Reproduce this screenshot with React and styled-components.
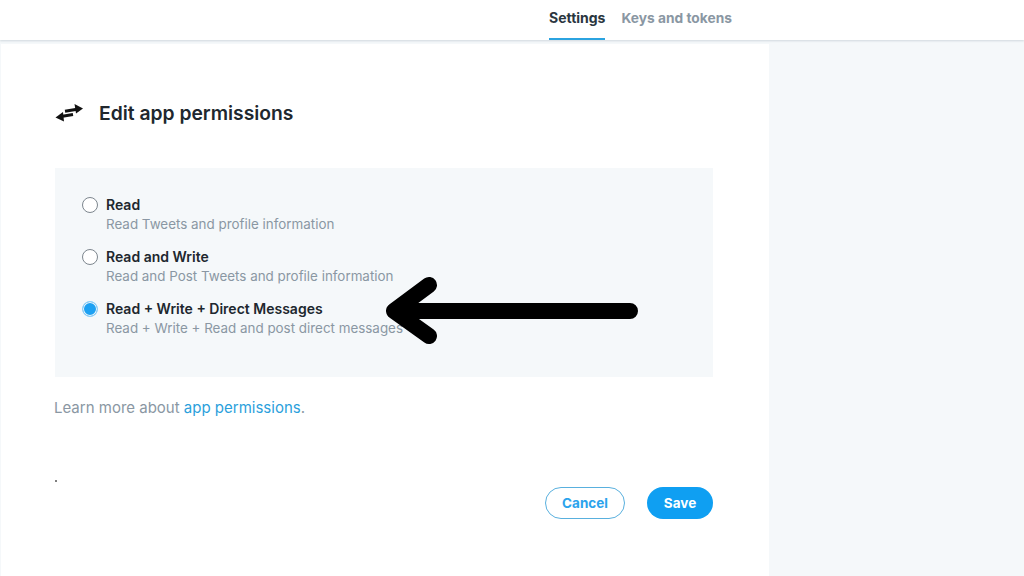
import React from "react";
import styled, { createGlobalStyle } from "styled-components";

const GlobalStyle = createGlobalStyle`
  html, body {
    margin: 0;
    padding: 0;
    height: 100%;
    overflow: hidden;
    background: #f5f8fa;
    font-family: Inter, "Liberation Sans", sans-serif;
  }
`;

const Page = styled.div`
  position: relative;
  width: 1024px;
  height: 576px;
  overflow: hidden;
  background: #f5f8fa;
`;

const Header = styled.div`
  height: 40px;
  background: #fff;
  box-shadow: 0 1px 2px rgba(101, 119, 134, 0.25);
  display: flex;
  justify-content: flex-start;
  padding-left: 549px;
  gap: 16px;
`;

const Tab = styled.div`
  height: 40px;
  box-sizing: border-box;
  padding-top: 10px;
  font-size: ${(p) => (p.$active ? "14px" : "13.75px")};
  line-height: 16px;
  font-weight: 700;
  color: ${(p) => (p.$active ? "#2a3640" : "#8a97a3")};
  border-bottom: 2px solid ${(p) => (p.$active ? "#2ba3e0" : "transparent")};
`;

const Card = styled.div`
  width: 768px;
  height: 532px;
  margin: 4px 0 0 1px;
  box-sizing: border-box;
  background: #fff;
  padding: 54px 56px 0 54px;
`;

const TitleRow = styled.div`
  display: flex;
  align-items: center;
  gap: 16px;
  height: 30px;
`;

const Title = styled.h2`
  margin: 0;
  font-size: 19.3px;
  line-height: 30px;
  font-weight: 600;
  color: #20272e;
`;

const Panel = styled.div`
  margin-top: 40px;
  height: 209px;
  box-sizing: border-box;
  background: #f5f8fa;
  padding: 28px 27px 0;
  display: flex;
  flex-direction: column;
  gap: 15px;
`;

const Option = styled.label`
  display: flex;
  gap: 8px;
`;

const Radio = styled.span`
  width: 16px;
  height: 16px;
  margin-top: 1px;
  flex: none;
  box-sizing: border-box;
  border-radius: 50%;
  background: ${(p) => (p.$checked ? "#1da1f2" : "#fff")};
  border: 1px solid ${(p) => (p.$checked ? "#8fd0f8" : "#7d868e")};
  box-shadow: ${(p) => (p.$checked ? "inset 0 0 0 1px #f5f8fa" : "none")};
`;

const OptionText = styled.div`
  display: flex;
  flex-direction: column;
  gap: 2px;
`;

const OptionLabel = styled.div`
  font-size: 14px;
  line-height: 18px;
  font-weight: 600;
  color: #20272e;
`;

const OptionHint = styled.div`
  font-size: 13.4px;
  line-height: 17px;
  color: #8a97a3;
`;

const Learn = styled.p`
  margin: 22px 0 0 -1px;
  font-size: 15px;
  line-height: 18px;
  color: #8a97a3;

  a {
    color: #2b9fdc;
    text-decoration: none;
  }
`;

const Dot = styled.div`
  width: 2px;
  height: 2px;
  margin-top: 63px;
  border-radius: 50%;
  background: #555;
`;

const Actions = styled.div`
  display: flex;
  justify-content: flex-end;
  gap: 22px;
  margin-top: 5px;
`;

const Button = styled.button`
  height: 32px;
  width: ${(p) => (p.$primary ? "66px" : "80px")};
  padding: 0;
  border-radius: 16px;
  box-sizing: border-box;
  font-family: inherit;
  font-size: 13.5px;
  font-weight: 700;
  color: ${(p) => (p.$primary ? "#fff" : "#2ba3ec")};
  background: ${(p) => (p.$primary ? "#0f9ff2" : "#fff")};
  border: ${(p) => (p.$primary ? "none" : "1px solid #59b0de")};
`;

const ArrowOverlay = styled.svg`
  position: absolute;
  left: 380px;
  top: 270px;
`;

const SwapIcon = () => (
  <svg width="28" height="20" viewBox="0 0 28 20" fill="none">
    <path d="M10 8.2 L22 6.2" stroke="#111" strokeWidth="3" />
    <path d="M19.5 1 L28 5.4 L21 10.4 Z" fill="#111" />
    <path d="M18 11.6 L6 13.6" stroke="#111" strokeWidth="3" />
    <path d="M8 9 L0.5 14.4 L9 18.6 Z" fill="#111" />
  </svg>
);

const options = [
  { label: "Read", hint: "Read Tweets and profile information" },
  { label: "Read and Write", hint: "Read and Post Tweets and profile information" },
  { label: "Read + Write + Direct Messages", hint: "Read + Write + Read and post direct messages", checked: true },
];

export default function App() {
  return (
    <Page>
      <GlobalStyle />
      <Header>
        <Tab $active>Settings</Tab>
        <Tab>Keys and tokens</Tab>
      </Header>
      <Card>
        <TitleRow>
          <SwapIcon />
          <Title>Edit app permissions</Title>
        </TitleRow>
        <Panel>
          {options.map((o) => (
            <Option key={o.label}>
              <Radio $checked={o.checked} />
              <OptionText>
                <OptionLabel>{o.label}</OptionLabel>
                <OptionHint>{o.hint}</OptionHint>
              </OptionText>
            </Option>
          ))}
        </Panel>
        <Learn>
          Learn more about <a href="#permissions">app permissions</a>.
        </Learn>
        <Dot />
        <Actions>
          <Button>Cancel</Button>
          <Button $primary>Save</Button>
        </Actions>
      </Card>
      <ArrowOverlay width="270" height="80" viewBox="0 0 270 80" fill="none">
        <path
          d="M250 41 H14 M49 15 L14 41 L49 66"
          stroke="#000"
          strokeWidth="16"
          strokeLinecap="round"
          strokeLinejoin="round"
        />
      </ArrowOverlay>
    </Page>
  );
}
